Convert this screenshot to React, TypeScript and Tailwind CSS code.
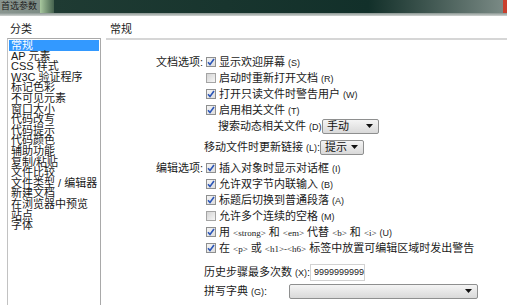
import React from "react";

const categories = [
  "常规",
  "AP 元素",
  "CSS 样式",
  "W3C 验证程序",
  "标记色彩",
  "不可见元素",
  "窗口大小",
  "代码改写",
  "代码提示",
  "代码颜色",
  "辅助功能",
  "复制/粘贴",
  "文件比较",
  "文件类型 / 编辑器",
  "新建文档",
  "在浏览器中预览",
  "站点",
  "字体",
];

const Key = ({ k }: { k: string }) => (
  <span className="text-[9px] text-[#222] ml-[3px]">({k})</span>
);

const CheckBox = ({ checked }: { checked: boolean }) =>
  checked ? (
    <span className="block w-[10px] h-[10px] border border-[#8e8f8f] bg-gradient-to-br from-[#f4f4f4] to-[#dedede] flex items-center justify-center">
      <svg width="8" height="8" viewBox="0 0 8 8">
        <path d="M1 4.2 L3 6.5 L7 1" fill="none" stroke="#2a55b8" strokeWidth="1.6" />
      </svg>
    </span>
  ) : (
    <span className="block w-[10px] h-[10px] border border-[#a4a4a4] bg-gradient-to-br from-[#d4d4d4] to-[#f6f6f6]" />
  );

const Arrow = () => (
  <svg width="7" height="4" viewBox="0 0 7 4">
    <path d="M0 0 H7 L3.5 4 Z" fill="#111" />
  </svg>
);

const Select = ({ value, w }: { value: string; w: string }) => (
  <div
    className={`${w} h-[15px] border border-[#8e8f8f] rounded-[2px] bg-gradient-to-b from-[#f4f4f4] to-[#d9d9d9] flex items-center justify-between pl-[4px] pr-[5px] text-[11px] text-[#111]`}
  >
    <span>{value}</span>
    <Arrow />
  </div>
);

const CheckRow = ({ checked, children }: { checked: boolean; children: React.ReactNode }) => (
  <div className="h-[16px] flex items-center">
    <span className="w-[56px] shrink-0" />
    <span className="ml-[2px]">
      <CheckBox checked={checked} />
    </span>
    <span className="ml-[3px] whitespace-nowrap">{children}</span>
  </div>
);

const Tag = ({ t }: { t: string }) => (
  <span className="text-[9px] font-['Liberation_Serif',serif]">{t}</span>
);

export default function App() {
  return (
    <div className="w-[507px] h-[305px] overflow-hidden bg-white text-[11px] text-[#1a1a1a] font-['Liberation_Sans','Noto_Sans_CJK_SC',sans-serif]">
      {/* title bar */}
      <div className="h-[13px] flex overflow-hidden">
        <div className="w-[40px] bg-gradient-to-r from-[#8a9690] to-[#7d8c85] text-[9px] leading-[13px] text-[#222] pl-[1px] overflow-hidden whitespace-nowrap">
          首选参数
        </div>
        <div className="w-[14px] bg-gradient-to-r from-[#a9c99f] to-[#46634f]" />
        <div className="flex-1 bg-gradient-to-r from-[#1f3b33] via-[#12302a] via-70% to-[#7a8a85]" />
        <div className="w-[4px] bg-[#c9402e]" />
      </div>
      <div className="h-[3px] bg-gradient-to-b from-[#8a9692] to-[#d0d4d2]" />

      <div className="flex">
        {/* categories */}
        <div className="w-[106px] shrink-0 pt-[6px]">
          <div className="pl-[10px] h-[14px] leading-[14px]">分类</div>
          <div className="ml-[7px] mt-[2px] w-[94px] h-[300px] border border-[#a9a9a9] border-l-[#c2c2c2] pt-[1px] px-[1px]">
            {categories.map((c, i) => (
              <div
                key={c}
                className={`px-[2px] leading-[10.6px] whitespace-nowrap ${
                  i === 0 ? "bg-[#3399ff] text-white" : ""
                }`}
              >
                {c}
              </div>
            ))}
          </div>
        </div>

        {/* general */}
        <div className="flex-1 pt-[6px]">
          <div className="pl-[4px] h-[14px] leading-[14px]">常规</div>
          <div className="h-[2px] bg-[#d6d6d6] mt-[2px]" />

          <div className="pl-[42px] pt-[14px]">
            <div className="h-[16px] flex items-center">
              <span className="w-[56px] shrink-0 text-right pr-[1px]">文档选项:</span>
              <span className="ml-[2px]">
                <CheckBox checked />
              </span>
              <span className="ml-[3px]">
                显示欢迎屏幕<Key k="S" />
              </span>
            </div>
            <CheckRow checked={false}>
              启动时重新打开文档<Key k="R" />
            </CheckRow>
            <CheckRow checked>
              打开只读文件时警告用户<Key k="W" />
            </CheckRow>
            <CheckRow checked>
              启用相关文件<Key k="T" />
            </CheckRow>
            <div className="h-[16px] flex items-center pl-[70px]">
              <span className="w-[104px] shrink-0 whitespace-nowrap">
                搜索动态相关文件<Key k="D" />:
              </span>
              <Select value="手动" w="w-[57px]" />
            </div>

            <div className="h-[18px] mt-[4px] flex items-center pl-[56px]">
              <span className="w-[116px] shrink-0 whitespace-nowrap">
                移动文件时更新链接<Key k="L" />:
              </span>
              <Select value="提示" w="w-[44px]" />
            </div>

            <div className="h-[16px] mt-[4px] flex items-center">
              <span className="w-[56px] shrink-0 text-right pr-[1px]">编辑选项:</span>
              <span className="ml-[2px]">
                <CheckBox checked />
              </span>
              <span className="ml-[3px]">
                插入对象时显示对话框<Key k="I" />
              </span>
            </div>
            <CheckRow checked>
              允许双字节内联输入<Key k="B" />
            </CheckRow>
            <CheckRow checked>
              标题后切换到普通段落<Key k="A" />
            </CheckRow>
            <CheckRow checked={false}>
              允许多个连续的空格<Key k="M" />
            </CheckRow>
            <CheckRow checked>
              用 <Tag t="<strong>" /> 和 <Tag t="<em>" /> 代替 <Tag t="<b>" /> 和 <Tag t="<i>" />
              <Key k="U" />
            </CheckRow>
            <CheckRow checked>
              在 <Tag t="<p>" /> 或 <Tag t="<h1>-<h6>" /> 标签中放置可编辑区域时发出警告
            </CheckRow>

            <div className="h-[18px] mt-[7px] flex items-center pl-[56px]">
              <span className="w-[106px] shrink-0 whitespace-nowrap">
                历史步骤最多次数<Key k="X" />:
              </span>
              <div className="w-[55px] h-[17px] border border-[#d2d2d2] bg-white text-[9px] leading-[15px] pl-[3px] text-[#222]">
                9999999999
              </div>
            </div>
            <div className="h-[16px] mt-[2px] flex items-center pl-[56px]">
              <span className="w-[85px] shrink-0 whitespace-nowrap">
                拼写字典<Key k="G" />:
              </span>
              <Select value="" w="w-[189px]" />
            </div>
          </div>
        </div>
      </div>
    </div>
  );
}
